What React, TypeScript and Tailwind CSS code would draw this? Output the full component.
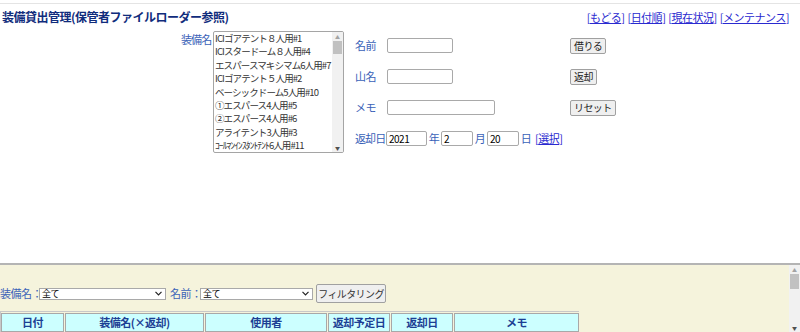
import React from 'react';

const font = { fontFamily: '"Noto Sans CJK JP", "Noto Sans", sans-serif' };

const items = [
  'ICIゴアテント８人用#1',
  'ICIスタードーム８人用#4',
  'エスパースマキシマム6人用#7',
  'ICIゴアテント５人用#2',
  'ベーシックドーム5人用#10',
  '①エスパース4人用#5',
  '②エスパース4人用#6',
  'アライテント3人用#3',
  'ｺｰﾙﾏﾝｲﾝｽﾀﾝﾄﾃﾝﾄ6人用#11',
];

function Input({ w, value = '' }: { w: string; value?: string }) {
  return (
    <div className={`${w} h-[15px] border border-[#a9a9a9] rounded-[2px] bg-white text-[10px] leading-[13px] pl-[2px] text-black`}>
      {value}
    </div>
  );
}

function Btn({ children }: { children: React.ReactNode }) {
  return (
    <div className="inline-flex h-[16px] items-center px-[3px] border border-[#a0a0a0] rounded-[2px] bg-[#efefef] text-[10px] tracking-[-0.6px] text-[#222]">
      {children}
    </div>
  );
}

function Select({ w }: { w: string }) {
  return (
    <div className={`${w} h-[12px] flex items-center justify-between border border-[#a9a9a9] bg-white text-[9px] leading-none pl-[2px] pr-[3px] text-black`}>
      <span>全て</span>
      <svg width="7" height="5" viewBox="0 0 7 5">
        <path d="M0.5 0.8 L3.5 3.8 L6.5 0.8" fill="none" stroke="#222" strokeWidth="1.2" />
      </svg>
    </div>
  );
}

function ScrollBar({ thumb }: { thumb: string }) {
  return (
    <div className="w-[11px] shrink-0 bg-[#f1f1f1] flex flex-col items-center">
      <div className="h-[9px] flex items-center text-[5px] text-[#a3a3a3]">▲</div>
      <div className={`w-[9px] ${thumb} bg-[#c1c1c1]`} />
      <div className="flex-1" />
      <div className="h-[9px] flex items-center text-[5px] text-[#505050]">▼</div>
    </div>
  );
}

const links = ['もどる', '日付順', '現在状況', 'メンテナンス'];
const cols = [
  { t: '日付', w: 'w-[63px]' },
  { t: '装備名(×返却)', w: 'w-[139px]' },
  { t: '使用者', w: 'w-[122px]' },
  { t: '返却予定日', w: 'w-[62px]' },
  { t: '返却日', w: 'w-[62px]' },
  { t: 'メモ', w: 'w-[125px]' },
];

export default function App() {
  return (
    <div className="w-[800px] h-[332px] overflow-hidden bg-white flex flex-col" style={font}>
      <div className="h-[263px] shrink-0">
        <div className="mt-[3px] border-t border-[#e4e4e4]" />
        <div className="flex items-center justify-between h-[26px] pl-[2px] pr-[11px]">
          <h1 className="text-[12px] font-bold tracking-[-0.5px] text-[#102c7c]">装備貸出管理(保管者ファイルローダー参照)</h1>
          <div className="flex gap-[3px] text-[11px] tracking-[-0.5px] text-[#2a2ad0]">
            {links.map((l) => (
              <span key={l}>
                [<span className="underline">{l}</span>]
              </span>
            ))}
          </div>
        </div>

        <div className="flex pl-[181px] pt-[1px]">
          <span className="text-[11px] tracking-[-0.9px] whitespace-nowrap text-[#3a62b8] leading-[14px] mt-[1px] w-[32px]">装備名</span>
          <div className="w-[131px] h-[122px] border border-[#a5a5a5] rounded-[2px] bg-white flex overflow-hidden">
            <div className="flex-1 min-w-0 overflow-hidden pl-[1px]">
              {items.map((it) => (
                <div key={it} className="text-[9.5px] tracking-[-0.9px] leading-[13.4px] text-[#333] whitespace-nowrap">
                  {it}
                </div>
              ))}
            </div>
            <ScrollBar thumb="h-[13px]" />
          </div>

          <div className="ml-[11px] mt-[7px] grid grid-cols-[32px_183px_auto] auto-rows-[31px] text-[11px] text-[#3a62b8]">
            <span className="leading-[15px] whitespace-nowrap tracking-[-0.4px]">名前</span>
            <Input w="w-[66px]" />
            <div className="-mt-[1px]"><Btn>借りる</Btn></div>

            <span className="leading-[15px] whitespace-nowrap tracking-[-0.4px]">山名</span>
            <Input w="w-[66px]" />
            <div className="-mt-[1px]"><Btn>返却</Btn></div>

            <span className="leading-[15px] whitespace-nowrap tracking-[-0.4px]">メモ</span>
            <Input w="w-[108px]" />
            <div className="-mt-[1px]"><Btn>リセット</Btn></div>

            <span className="leading-[15px] whitespace-nowrap tracking-[-0.9px]">返却日</span>
            <div className="col-span-2 flex items-start gap-[1px] whitespace-nowrap -ml-[1px] tracking-[-0.5px]">
              <Input w="w-[41px]" value="2021" />
              <span className="leading-[15px] w-[12px] text-center">年</span>
              <Input w="w-[32px]" value="2" />
              <span className="leading-[15px] w-[12px] text-center">月</span>
              <Input w="w-[32px]" value="20" />
              <span className="leading-[15px] w-[12px] text-center">日</span>
              <span className="leading-[15px] ml-[2px] text-[#2a2ad0]">
                [<span className="underline">選択</span>]
              </span>
            </div>
          </div>
        </div>
      </div>

      <div className="flex-1 border-t-2 border-[#b4b4b4] bg-[#f5f3dc] flex">
        <div className="flex-1">
          <div className="flex items-center h-[19px] mt-[19px] text-[11px] tracking-[-0.5px] text-[#3a62b8]">
            <span className="w-[39px] whitespace-nowrap">装備名：</span>
            <Select w="w-[127px]" />
            <span className="ml-[4px] w-[30px] whitespace-nowrap">名前：</span>
            <Select w="w-[113px]" />
            <div className="ml-[3px] h-[19px] w-[70px] justify-center flex items-center border border-[#a0a0a0] rounded-[2px] bg-[#efefef] text-[10px] tracking-[-0.6px] text-[#333]">
              フィルタリング
            </div>
          </div>
          <div className="mt-[8px] inline-flex gap-[1px] border-l border-t border-[#c8c8c8] pt-[1px]">
            {cols.map((c) => (
              <div
                key={c.t}
                className={`${c.w} h-[19px] flex items-center justify-center bg-[#ccffff] border border-[#a8a8a8] text-[11px] tracking-[-0.5px] font-bold text-[#1c3f94]`}
              >
                {c.t}
              </div>
            ))}
          </div>
        </div>
        <ScrollBar thumb="h-[15px]" />
      </div>
    </div>
  );
}
